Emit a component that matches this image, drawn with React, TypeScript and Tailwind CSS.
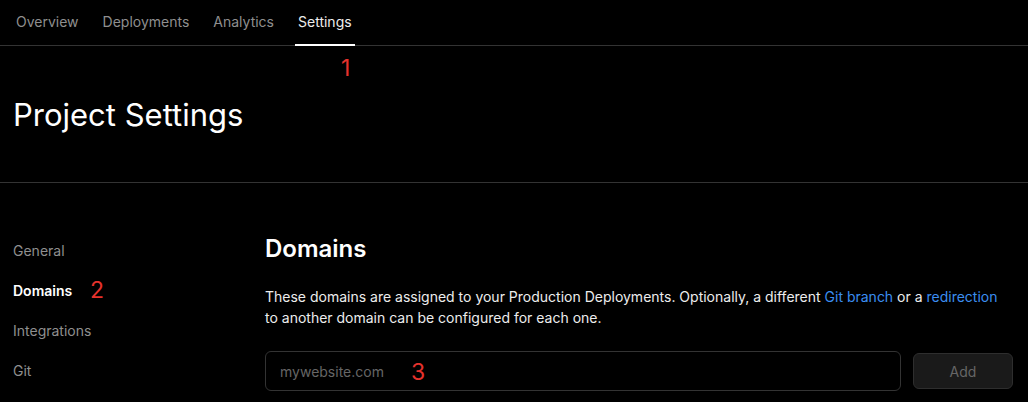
import React from "react";

const font = { fontFamily: "Inter, 'Noto Sans', sans-serif" };

export default function App() {
  const tabs = ["Overview", "Deployments", "Analytics", "Settings"];
  const side = ["General", "Domains", "Integrations", "Git"];
  return (
    <div className="w-[1028px] h-[402px] overflow-hidden bg-black text-[#ededed]" style={font}>
      <div className="relative h-[46px] border-b border-[#333333] flex items-stretch pl-[13px] gap-[18px]">
        {tabs.map((t) => (
          <div
            key={t}
            className={`relative flex items-center px-[3px] text-[14px] pb-[2px] ${
              t === "Settings" ? "text-[#ededed]" : "text-[#8f8f8f]"
            }`}
          >
            {t}
            {t === "Settings" && (
              <div className="absolute left-0 right-0 bottom-[-1px] h-[2px] bg-white" />
            )}
          </div>
        ))}
        <span className="absolute left-[341px] top-[55px] text-[23px] text-[#e5322d] leading-none pt-[2px]">1</span>
      </div>
      <div className="h-[137px] border-b border-[#333333] flex items-center pl-[13px] pt-[2px]">
        <h1 className="text-[31px] font-normal text-white">Project Settings</h1>
      </div>
      <div className="flex pt-[48px]">
        <div className="w-[265px] shrink-0 pl-[13px] flex flex-col gap-[19px] pt-[9px]">
          {side.map((s) => (
            <div
              key={s}
              className={`relative h-[21px] leading-[21px] text-[14px] ${
                s === "Domains" ? "text-white font-semibold" : "text-[#8f8f8f]"
              }`}
            >
              {s}
              {s === "Domains" && (
                <span className="absolute left-[77px] top-[-4px] text-[23px] font-normal text-[#e5322d] leading-[28px]">2</span>
              )}
            </div>
          ))}
        </div>
        <div className="flex-1 pr-[15px]">
          <h2 className="text-[24px] font-semibold text-white leading-[32px] mt-[2px]">Domains</h2>
          <p className="mt-[21px] text-[14px] leading-[21px] text-[#ededed]">
            These domains are assigned to your Production Deployments. Optionally, a different{" "}
            <span className="text-[#3b8ef0]">Git branch</span> or a{" "}
            <span className="text-[#3b8ef0]">redirection</span> to another domain can be configured for each one.
          </p>
          <div className="mt-[23px] flex items-center gap-[12px]">
            <div className="relative h-[40px] w-[636px] rounded-[6px] border border-[#333333] flex items-center pl-[14px] text-[14px] text-[#666666]">
              mywebsite.com
              <span className="absolute left-[145px] top-[6px] text-[23px] text-[#e5322d] leading-[28px]">3</span>
            </div>
            <div className="h-[36px] w-[100px] rounded-[6px] border border-[#2e2e2e] bg-[#1a1a1a] flex items-center justify-center text-[14px] text-[#666666]">
              Add
            </div>
          </div>
        </div>
      </div>
    </div>
  );
}
